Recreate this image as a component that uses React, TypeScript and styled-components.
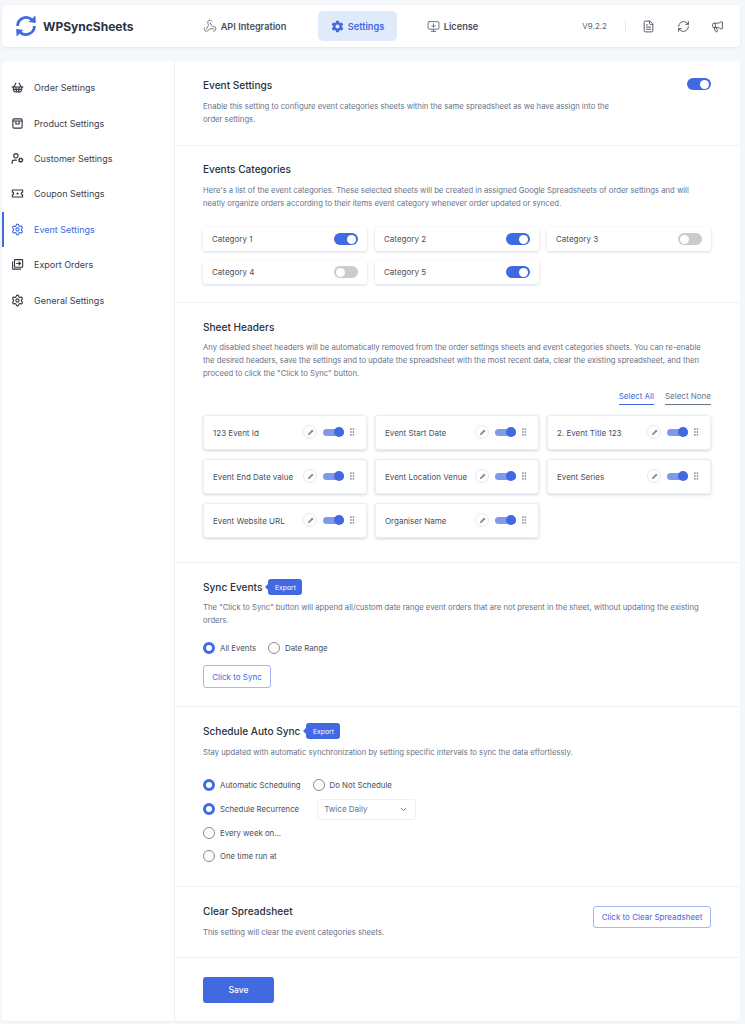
import React from "react";
import styled, { createGlobalStyle } from "styled-components";
import {
  ChevronDown, FileText, GripVertical, Megaphone, MonitorDown, RefreshCw, Settings,
  ShoppingBasket, UserCog, Webhook,
} from "lucide-react";
import { IoSettingsSharp } from "react-icons/io5";

const Global = createGlobalStyle`
  html, body { margin: 0; padding: 0; background: #f5f8fb; }
  body { font-family: Inter, "Liberation Sans", sans-serif; color: #2b3040; -webkit-font-smoothing: antialiased; }
  * { box-sizing: border-box; }
`;

const Page = styled.div`
  width: 745px;
  height: 1024px;
  padding: 5px 5px 3px 2px;
  overflow: hidden;
`;

const Header = styled.header`
  height: 42px;
  background: #fff;
  border-radius: 4px;
  box-shadow: 0 1px 3px rgba(40, 60, 100, 0.1);
  display: flex;
  align-items: center;
  padding: 0 16px 0 12px;
`;

const Brand = styled.div`
  display: flex;
  align-items: center;
  gap: 5px;
  width: 178px;
  font-size: 12px;
  font-weight: 700;
  color: #2a3142;
`;

const Nav = styled.nav`
  display: flex;
  align-items: center;
  flex: 1;
`;

const NavItem = styled.div<{ $active?: boolean; $w: number; $ml?: number }>`
  display: flex;
  align-items: center;
  justify-content: center;
  gap: 4px;
  width: ${(p) => p.$w}px;
  height: 30px;
  margin-left: ${(p) => p.$ml ?? 0}px;
  border-radius: 5px;
  font-size: 9.2px;
  font-weight: 600;
  color: ${(p) => (p.$active ? "#4169e1" : "#4a4f5c")};
  background: ${(p) => (p.$active ? "#dfebfb" : "transparent")};
`;

const Version = styled.span`
  font-size: 8px;
  color: #5d6472;
  padding-right: 18px;
  border-right: 1px solid #e8ebf0;
  line-height: 13px;
`;

const HeaderIcons = styled.div`
  display: flex;
  align-items: center;
  gap: 21.5px;
  margin-left: 16px;
  color: #4a4f5c;
`;

const Panel = styled.div`
  margin-top: 14px;
  height: 960px;
  display: flex;
  background: #fff;
  border-radius: 4px;
  box-shadow: 0 1px 2px rgba(40, 60, 100, 0.06);
`;

const Sidebar = styled.aside`
  width: 173px;
  flex: none;
  padding-top: 9px;
  border-right: 1px solid #eef0f6;
`;

const SideItem = styled.div<{ $active?: boolean }>`
  height: 35.4px;
  display: flex;
  align-items: center;
  gap: 10px;
  padding-left: 7px;
  font-size: 9px;
  color: ${(p) => (p.$active ? "#4169e1" : "#3c4250")};
  border-left: 2.5px solid ${(p) => (p.$active ? "#4169e1" : "transparent")};
`;

const Main = styled.main`
  flex: 1;
  min-width: 0;
`;

const Section = styled.section<{ $h: number; $pt: number }>`
  height: ${(p) => p.$h}px;
  padding: ${(p) => p.$pt}px 29px 0 28px;
  border-bottom: 1px solid #eef0f6;
  &:last-child { border-bottom: 0; }
`;

const SplitRow = styled.div`
  display: flex;
  justify-content: space-between;
  align-items: flex-start;
`;

const TitleRow = styled.div`
  display: flex;
  align-items: center;
  gap: 5px;
  height: 14px;
`;

const Title = styled.h2`
  margin: 0;
  font-size: 10.1px;
  font-weight: 500;
  line-height: 14px;
  color: #2a2f3c;
`;

const Desc = styled.p<{ $mt?: number; $maxw?: number }>`
  margin: ${(p) => p.$mt ?? 8}px 0 0;
  font-size: 7.7px;
  line-height: 13px;
  color: #66728c;
  max-width: ${(p) => p.$maxw ?? 509}px;
`;

const Badge = styled.span`
  position: relative;
  height: 16px;
  width: 34px;
  margin-left: 1px;
  display: flex;
  align-items: center;
  justify-content: center;
  background: #4169e1;
  border-radius: 3px;
  color: #fff;
  font-size: 6.8px;
  &::before {
    content: "";
    position: absolute;
    left: -3px;
    top: 5px;
    border-style: solid;
    border-width: 3px 3px 3px 0;
    border-color: transparent #4169e1 transparent transparent;
  }
`;

const Grid = styled.div<{ $mt: number }>`
  display: grid;
  grid-template-columns: repeat(3, 164px);
  column-gap: 8px;
  row-gap: 9px;
  margin-top: ${(p) => p.$mt}px;
`;

const CatCard = styled.div`
  height: 24px;
  background: #fff;
  border-radius: 3px;
  box-shadow: 0 1px 3px rgba(50, 70, 120, 0.2);
  display: flex;
  align-items: center;
  justify-content: space-between;
  padding: 0 9px;
  font-size: 8px;
  color: #4a4f5c;
`;

const Toggle = styled.span<{ $on: boolean }>`
  position: relative;
  display: block;
  width: 24px;
  height: 12px;
  border-radius: 6px;
  background: ${(p) => (p.$on ? "#4169e1" : "#cbcbcb")};
  &::after {
    content: "";
    position: absolute;
    top: 1.5px;
    left: ${(p) => (p.$on ? "13px" : "2px")};
    width: 9px;
    height: 9px;
    border-radius: 50%;
    background: #fff;
  }
`;

const SelectRow = styled.div`
  display: flex;
  justify-content: flex-end;
  gap: 11px;
  margin-top: 9px;
`;

const SelectLink = styled.span<{ $active?: boolean }>`
  font-size: 8px;
  line-height: 14px;
  padding-bottom: 1px;
  color: ${(p) => (p.$active ? "#4169e1" : "#66728c")};
  border-bottom: 1px solid ${(p) => (p.$active ? "#4169e1" : "#66728c")};
`;

const HeadCard = styled.div`
  height: 35px;
  background: #fff;
  border: 1px solid #eceef3;
  border-radius: 3px;
  box-shadow: 0 1px 3px rgba(50, 70, 120, 0.22);
  display: flex;
  align-items: center;
  padding: 0 10px 0 9px;
  font-size: 8px;
  color: #4a4f5c;
`;

const HeadLabel = styled.span`
  flex: 1;
  min-width: 0;
  white-space: nowrap;
`;

const EditBtn = styled.span`
  width: 14px;
  height: 14px;
  margin-top: -1px;
  border: 1px solid #e7e9ef;
  border-radius: 50%;
  display: flex;
  align-items: center;
  justify-content: center;
`;

const Slider = styled.span`
  position: relative;
  display: block;
  width: 21px;
  height: 7px;
  margin: -1px 0 0 6px;
  border-radius: 4px;
  background: #7e9aed;
  &::after {
    content: "";
    position: absolute;
    top: -1.5px;
    right: 0;
    width: 10px;
    height: 10px;
    border-radius: 50%;
    background: #4169e1;
  }
`;

const Grip = styled.span`
  display: flex;
  margin: -1px -1px 0 3px;
  color: #7b8294;
`;

const RadioRow = styled.div<{ $mt?: number }>`
  display: flex;
  align-items: center;
  gap: 12px;
  height: 12px;
  margin-top: ${(p) => p.$mt ?? 11.5}px;
`;

const RadioOption = styled.label`
  display: flex;
  align-items: center;
  gap: 5px;
  font-size: 7.8px;
  color: #4a4f5c;
  white-space: nowrap;
`;

const Dot = styled.span<{ $on?: boolean }>`
  width: 12px;
  height: 12px;
  flex: none;
  border-radius: 50%;
  background: #fff;
  border: ${(p) => (p.$on ? "3.5px solid #4169e1" : "1px solid #8b8b8b")};
`;

const OutlineBtn = styled.button<{ $w: number; $h: number; $mt?: number }>`
  display: block;
  width: ${(p) => p.$w}px;
  height: ${(p) => p.$h}px;
  margin-top: ${(p) => p.$mt ?? 0}px;
  padding: 0;
  background: #fff;
  border: 1px solid #a5b8f0;
  border-radius: 3px;
  color: #4169e1;
  font: 8px Inter, "Liberation Sans", sans-serif;
`;

const FakeSelect = styled.div`
  width: 99px;
  height: 21px;
  margin-left: 6px;
  padding: 0 7px 0 6px;
  border: 1px solid #eef0f6;
  border-radius: 3px;
  display: flex;
  align-items: center;
  justify-content: space-between;
  font-size: 8px;
  color: #66728c;
`;

const SaveBtn = styled.button`
  display: block;
  width: 71px;
  height: 26px;
  padding: 0;
  background: #4169e1;
  border: 0;
  border-radius: 3px;
  color: #fff;
  font: 500 8.5px Inter, "Liberation Sans", sans-serif;
`;

const Logo = () => (
  <svg width="24" height="24" viewBox="0 0 24 24" fill="none">
    <path d="M3.6 12A8.6 8.6 0 0 1 17.8 5.5" stroke="#3f6ae3" strokeWidth="2.8" />
    <path d="M20.4 12A8.6 8.6 0 0 1 6.2 18.5" stroke="#3f6ae3" strokeWidth="2.8" />
    <path d="M21.4 1.6 21.8 9 14.6 8z" fill="#3f6ae3" />
    <path d="M2.6 22.4 2.2 15 9.4 16z" fill="#3f6ae3" />
  </svg>
);

const Ic = ({ children }: { children: React.ReactNode }) => (
  <svg width="13" height="13" viewBox="0 0 24 24" fill="none" stroke="#2f3441" strokeWidth="2" strokeLinecap="round" strokeLinejoin="round">
    {children}
  </svg>
);

const ProductIcon = () => (
  <Ic>
    <rect x="3.5" y="3.5" width="17" height="17" rx="2" />
    <path d="M3.5 7.5h17M9 7.5V13h6V7.5" />
  </Ic>
);

const CouponIcon = () => (
  <Ic>
    <path d="M2.5 5.5h19v4a2.5 2.5 0 0 0 0 5v4h-19v-4a2.5 2.5 0 0 0 0-5z" />
    <path d="m12 9 .9 2h2l-1.6 1.4.6 2.1-1.9-1.2-1.9 1.2.6-2.1L9.1 11h2z" fill="#2f3441" stroke="none" />
  </Ic>
);

const ExportIcon = () => (
  <Ic>
    <rect x="6.5" y="3" width="15" height="14" rx="1" />
    <path d="M3 7v13.5h15M10.5 10h7M14.5 7l3 3-3 3" />
  </Ic>
);

const FilledPencil = () => (
  <svg width="7" height="7" viewBox="0 0 24 24" fill="#8a90a0">
    <path d="M3 21l1.2-6L16.5 2.7a1.5 1.5 0 0 1 2.1 0l2.7 2.7a1.5 1.5 0 0 1 0 2.1L9 19.8z" />
  </svg>
);

const sideIcon = { size: 13, color: "#2f3441", strokeWidth: 2 };

const sideItems: { label: string; icon: React.ReactNode; active?: boolean }[] = [
  { label: "Order Settings", icon: <ShoppingBasket {...sideIcon} /> },
  { label: "Product Settings", icon: <ProductIcon /> },
  { label: "Customer Settings", icon: <UserCog {...sideIcon} /> },
  { label: "Coupon Settings", icon: <CouponIcon /> },
  { label: "Event Settings", icon: <Settings size={13} color="#4169e1" strokeWidth={2} />, active: true },
  { label: "Export Orders", icon: <ExportIcon /> },
  { label: "General Settings", icon: <Settings {...sideIcon} /> },
];

const categories: [string, boolean][] = [
  ["Category 1", true], ["Category 2", true], ["Category 3", false],
  ["Category 4", false], ["Category 5", true],
];

const headers = [
  "123 Event Id", "Event Start Date", "2. Event Title 123",
  "Event End Date value", "Event Location Venue", "Event Series",
  "Event Website URL", "Organiser Name",
];

const Radio = ({ label, on }: { label: string; on?: boolean }) => (
  <RadioOption><Dot $on={on} />{label}</RadioOption>
);

export default function App() {
  return (
    <Page>
      <Global />
      <Header>
        <Brand><Logo />WPSyncSheets</Brand>
        <Nav>
          <NavItem $w={105}><Webhook size={14} color="#6b7280" strokeWidth={1.6} />API Integration</NavItem>
          <NavItem $active $w={79} $ml={21}><IoSettingsSharp size={13} color="#4169e1" />Settings</NavItem>
          <NavItem $w={83} $ml={14}><MonitorDown size={13} color="#6b7280" strokeWidth={1.8} />License</NavItem>
        </Nav>
        <Version>V9.2.2</Version>
        <HeaderIcons>
          <FileText size={13} strokeWidth={1.7} />
          <RefreshCw size={13} strokeWidth={1.7} />
          <Megaphone size={13} strokeWidth={1.7} />
        </HeaderIcons>
      </Header>
      <Panel>
        <Sidebar>
          {sideItems.map((s) => (
            <SideItem key={s.label} $active={s.active}>{s.icon}{s.label}</SideItem>
          ))}
        </Sidebar>
        <Main>
          <Section $h={85} $pt={17}>
            <SplitRow>
              <Title>Event Settings</Title>
              <Toggle $on />
            </SplitRow>
            <Desc $maxw={420}>Enable this setting to configure event categories sheets within the same spreadsheet as we have assign into the order settings.</Desc>
          </Section>
          <Section $h={157} $pt={16}>
            <Title>Events Categories</Title>
            <Desc>Here's a list of the event categories. These selected sheets will be created in assigned Google Spreadsheets of order settings and will neatly organize orders according to their items event category whenever order updated or synced.</Desc>
            <Grid $mt={17}>
              {categories.map(([label, on]) => (
                <CatCard key={label}>{label}<Toggle $on={on} /></CatCard>
              ))}
            </Grid>
          </Section>
          <Section $h={260} $pt={17}>
            <Title>Sheet Headers</Title>
            <Desc $mt={7}>Any disabled sheet headers will be automatically removed from the order settings sheets and event categories sheets. You can re-enable the desired headers, save the settings and to update the spreadsheet with the most recent data, clear the existing spreadsheet, and then proceed to click the "Click to Sync" button.</Desc>
            <SelectRow>
              <SelectLink $active>Select All</SelectLink>
              <SelectLink>Select None</SelectLink>
            </SelectRow>
            <Grid $mt={10}>
              {headers.map((h) => (
                <HeadCard key={h}>
                  <HeadLabel>{h}</HeadLabel>
                  <EditBtn><FilledPencil /></EditBtn>
                  <Slider />
                  <Grip><GripVertical size={10} /></Grip>
                </HeadCard>
              ))}
            </Grid>
          </Section>
          <Section $h={144} $pt={17}>
            <TitleRow><Title>Sync Events</Title><Badge>Export</Badge></TitleRow>
            <Desc $mt={7}>The "Click to Sync" button will append all/custom date range event orders that are not present in the sheet, without updating the existing orders.</Desc>
            <RadioRow $mt={15}>
              <Radio label="All Events" on />
              <Radio label="Date Range" />
            </RadioRow>
            <OutlineBtn $w={68} $h={23} $mt={11}>Click to Sync</OutlineBtn>
          </Section>
          <Section $h={180} $pt={17}>
            <TitleRow><Title>Schedule Auto Sync</Title><Badge>Export</Badge></TitleRow>
            <Desc>Stay updated with automatic synchronization by setting specific intervals to sync the data effortlessly.</Desc>
            <RadioRow $mt={20}>
              <Radio label="Automatic Scheduling" on />
              <Radio label="Do Not Schedule" />
            </RadioRow>
            <RadioRow $mt={12}>
              <Radio label="Schedule Recurrence" on />
              <FakeSelect>Twice Daily<ChevronDown size={9} color="#4a4f5c" /></FakeSelect>
            </RadioRow>
            <RadioRow><Radio label="Every week on..." /></RadioRow>
            <RadioRow><Radio label="One time run at" /></RadioRow>
          </Section>
          <Section $h={71} $pt={17}>
            <SplitRow>
              <div>
                <Title>Clear Spreadsheet</Title>
                <Desc>This setting will clear the event categories sheets.</Desc>
              </div>
              <OutlineBtn $w={118} $h={22} $mt={2}>Click to Clear Spreadsheet</OutlineBtn>
            </SplitRow>
          </Section>
          <Section $h={63} $pt={19}>
            <SaveBtn>Save</SaveBtn>
          </Section>
        </Main>
      </Panel>
    </Page>
  );
}
